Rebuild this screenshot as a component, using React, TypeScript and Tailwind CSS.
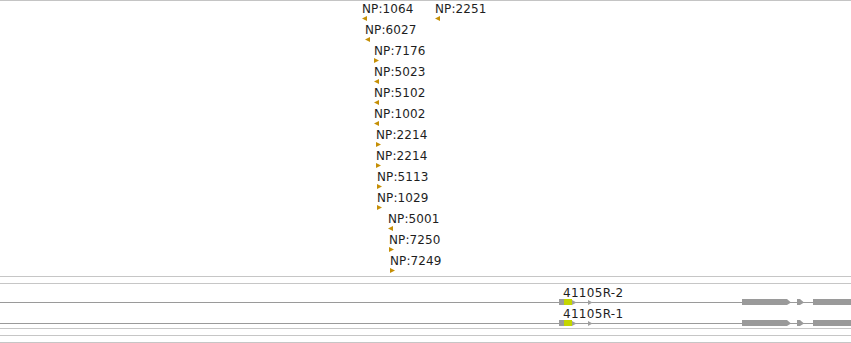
const rows: { x: number; label: string; dir: "L" | "R" }[][] = [
  [
    { x: 362, label: "NP:1064", dir: "L" },
    { x: 435, label: "NP:2251", dir: "L" },
  ],
  [{ x: 365, label: "NP:6027", dir: "L" }],
  [{ x: 374, label: "NP:7176", dir: "R" }],
  [{ x: 374, label: "NP:5023", dir: "L" }],
  [{ x: 374, label: "NP:5102", dir: "L" }],
  [{ x: 374, label: "NP:1002", dir: "L" }],
  [{ x: 376, label: "NP:2214", dir: "R" }],
  [{ x: 376, label: "NP:2214", dir: "R" }],
  [{ x: 377, label: "NP:5113", dir: "R" }],
  [{ x: 377, label: "NP:1029", dir: "R" }],
  [{ x: 388, label: "NP:5001", dir: "L" }],
  [{ x: 389, label: "NP:7250", dir: "R" }],
  [{ x: 390, label: "NP:7249", dir: "R" }],
];

const genes = ["41105R-2", "41105R-1"];

function Arrow({ dir }: { dir: "L" | "R" }) {
  return (
    <svg width="6" height="6" className="block">
      <polygon
        points={dir === "L" ? "5,0 5,5 0,2.5" : "0,0 5,2.5 0,5"}
        fill="#c58f06"
      />
    </svg>
  );
}

function Feature({ x, label, dir }: { x: number; label: string; dir: "L" | "R" }) {
  return (
    <div className="absolute top-0 flex flex-col" style={{ left: x }}>
      <span className="pt-px text-[12px] leading-[14px] tracking-[0.1px] text-[#1e1e1e] whitespace-nowrap">
        {label}
      </span>
      <Arrow dir={dir} />
    </div>
  );
}

function GeneGlyph() {
  return (
    <svg width="851" height="6" className="block">
      <rect x="0" y="3" width="851" height="1" fill="#9a9a9a" />
      <rect x="559" y="0" width="5" height="6" fill="#9c9c9c" />
      <rect x="564" y="0" width="8" height="6" fill="#c4d600" />
      <polygon points="572,1 576.5,3.5 572,6" fill="#a0a0a0" />
      <polygon points="588,1 592.5,3.5 588,6" fill="#a0a0a0" />
      <polygon points="742,0 787,0 791,3.5 787,6 742,6" fill="#9a9a9a" />
      <polygon points="797,0 800,0 804,3.5 800,6 797,6" fill="#9a9a9a" />
      <rect x="813" y="0" width="38" height="6" fill="#9a9a9a" />
    </svg>
  );
}

export default function App() {
  return (
    <div
      className="w-[851px] h-[343px] bg-white overflow-hidden"
      style={{ fontFamily: "'DejaVu Sans', Verdana, sans-serif" }}
    >
      <div className="h-px bg-[#c4c4c4]" />

      {/* feature track */}
      <div className="flex flex-col h-[275px]">
        {rows.map((row, i) => (
          <div key={i} className="relative h-[21px]">
            {row.map((f) => (
              <Feature key={f.label + f.x} {...f} />
            ))}
          </div>
        ))}
      </div>

      <div className="h-px bg-[#c6c6c6]" />
      <div className="h-[6px]" />
      <div className="h-px bg-[#c6c6c6]" />

      {/* gene track */}
      <div className="flex flex-col">
        {genes.map((g) => (
          <div key={g} className="flex flex-col pt-[3px]">
            <div className="h-[12px] pl-[563px] text-[12px] leading-[12px] tracking-[0.3px] text-[#1e1e1e] whitespace-nowrap">
              {g}
            </div>
            <GeneGlyph />
          </div>
        ))}
      </div>

      <div className="h-[2px]" />
      <div className="h-px bg-[#c6c6c6]" />
      <div className="h-[6px]" />
      <div className="h-px bg-[#c6c6c6]" />
      <div className="h-[6px]" />
      <div className="h-px bg-[#c6c6c6]" />
    </div>
  );
}
